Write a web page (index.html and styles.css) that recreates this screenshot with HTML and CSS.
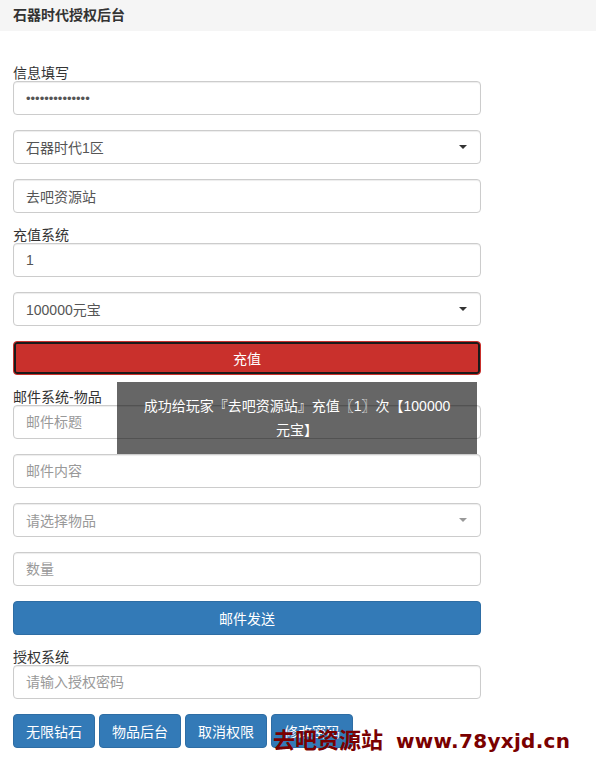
FILE: index.html
```html
<!DOCTYPE html>
<html lang="zh-CN">
<head>
<meta charset="utf-8">
<title>石器时代授权后台</title>
<link rel="stylesheet" href="styles.css">
</head>
<body>
<div class="header">石器时代授权后台</div>
<div class="content">
  <label class="label">信息填写</label>
  <input class="field" type="password" value="12345678901234">
  <div class="select"><span>石器时代1区</span></div>
  <input class="field" type="text" value="去吧资源站">

  <label class="label">充值系统</label>
  <input class="field" type="text" value="1">
  <div class="select"><span>100000元宝</span></div>
  <button class="btn btn-red">充值</button>

  <label class="label">邮件系统-物品</label>
  <input class="field" type="text" placeholder="邮件标题">
  <input class="field" type="text" placeholder="邮件内容">
  <div class="select select-ph"><span>请选择物品</span></div>
  <input class="field" type="text" placeholder="数量">
  <button class="btn btn-blue">邮件发送</button>

  <label class="label">授权系统</label>
  <input class="field" type="text" placeholder="请输入授权密码">
  <div class="btn-row">
    <button class="btn btn-blue btn-small">无限钻石</button>
    <button class="btn btn-blue btn-small">物品后台</button>
    <button class="btn btn-blue btn-small">取消权限</button>
    <button class="btn btn-blue btn-small">修改密码</button>
  </div>
</div>
<div class="toast">成功给玩家『去吧资源站』充值〖1〗次【100000元宝】</div>
<div class="watermark">去吧资源站 <span class="wm-url">www.78yxjd.cn</span></div>
</body>
</html>
```
FILE: styles.css
```css
* { box-sizing: border-box; }
html, body { margin: 0; padding: 0; background: #fff; }
body {
  font-family: "Liberation Sans", "Noto Sans CJK SC", sans-serif;
  font-size: 14px;
  color: #333;
  position: relative;
  width: 596px;
  height: 776px;
  overflow: hidden;
}
.header {
  height: 31px;
  background: #f5f5f5;
  font-weight: bold;
  font-size: 14px;
  line-height: 31px;
  padding-left: 13px;
  color: #333;
}
.content {
  width: 468px;
  margin-left: 13px;
  padding-top: 35px;
  display: flex;
  flex-direction: column;
}
.label {
  display: block;
  height: 15px;
  line-height: 15px;
  font-size: 14px;
  color: #333;
  margin-top: 15px;
}
.label:first-child { margin-top: 0; }
.field, .select, .btn { margin-top: 15px; }
.label + .field { margin-top: 0; }
.field {
  display: block;
  width: 468px;
  height: 34px;
  padding: 6px 12px;
  border: 1px solid #ccc;
  border-radius: 4px;
  font-family: inherit;
  font-size: 14px;
  color: #555;
  background: #fff;
  box-shadow: inset 0 1px 1px rgba(0,0,0,.075);
  outline: none;
}
.field::placeholder { color: #999; }
.field[type=password] { font-size: 13px; }
.select {
  position: relative;
  height: 34px;
  padding: 0 12px;
  border: 1px solid #ccc;
  border-radius: 4px;
  display: flex;
  align-items: center;
  color: #555;
  box-shadow: inset 0 1px 1px rgba(0,0,0,.075);
}
.select::after {
  content: "";
  position: absolute;
  right: 13px;
  top: 14px;
  border-left: 4px solid transparent;
  border-right: 4px solid transparent;
  border-top: 4px solid #333;
}
.select-ph { color: #999; }
.select-ph::after { border-top-color: #999; }
.btn {
  display: block;
  height: 34px;
  width: 468px;
  border-radius: 4px;
  font-family: inherit;
  font-size: 14px;
  color: #fff;
  padding: 0;
  cursor: pointer;
}
.btn-red {
  background: #c9302c;
  border: 1px solid #c9302c;
  box-shadow: inset 0 0 0 2px #1a1a1a;
}
.btn-blue {
  background: #337ab7;
  border: 1px solid #2e6da4;
}
.btn-row {
  display: flex;
  gap: 4px;
  margin-top: 15px;
}
.btn-small { width: 82px; margin-top: 0; }
.toast {
  position: absolute;
  left: 117px;
  top: 382px;
  width: 360px;
  padding: 12px 22px;
  background: rgba(0,0,0,.6);
  color: #fff;
  text-align: center;
  font-size: 14px;
  line-height: 24px;
}
.watermark {
  position: absolute;
  left: 273px;
  top: 724px;
  color: #7a0000;
  font-weight: bold;
  font-size: 22px;
  line-height: 28px;
  white-space: nowrap;
  font-family: "Noto Sans CJK SC", sans-serif;
}
.wm-url {
  font-family: "DejaVu Sans", sans-serif;
  font-size: 20px;
  margin-left: 8px;
  letter-spacing: 0.3px;
}
```
